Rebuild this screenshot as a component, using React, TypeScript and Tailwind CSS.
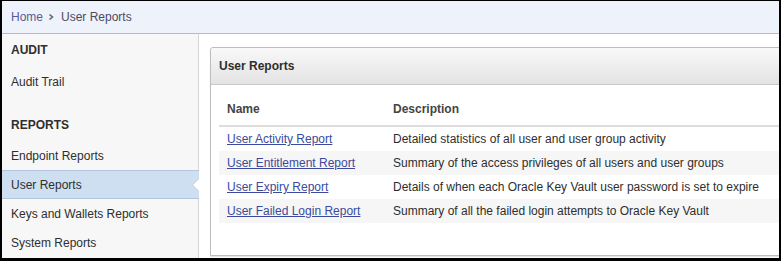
import { ReactNode } from 'react';

interface Report {
  name: string;
  description: string;
}

const reports: Report[] = [
  { name: 'User Activity Report', description: 'Detailed statistics of all user and user group activity' },
  { name: 'User Entitlement Report', description: 'Summary of the access privileges of all users and user groups' },
  { name: 'User Expiry Report', description: 'Details of when each Oracle Key Vault user password is set to expire' },
  { name: 'User Failed Login Report', description: 'Summary of all the failed login attempts to Oracle Key Vault' },
];

function NavHeading({ children }: { children: ReactNode }) {
  return <div className="h-[32px] flex items-center pl-[9px] font-bold text-[#2e2e2e]">{children}</div>;
}

function NavItem({ label, active }: { label: string; active?: boolean }) {
  if (active) {
    return (
      <div className="relative h-[29px] flex items-center pl-[9px] bg-[#cfdff2] border-y border-[#b4c6de] mr-[-1px] text-[#2e2e2e]">
        {label}
        {/* notch pointing at the content */}
        <span className="absolute right-0 top-1/2 -translate-y-1/2 w-0 h-0 border-y-[7px] border-y-transparent border-r-[7px] border-r-[#c3cfdd]" />
        <span className="absolute right-[-1px] top-1/2 -translate-y-1/2 w-0 h-0 border-y-[7px] border-y-transparent border-r-[7px] border-r-white" />
      </div>
    );
  }
  return <div className="h-[29px] flex items-center pl-[9px] text-[#2e2e2e]">{label}</div>;
}

export default function App() {
  return (
    <div
      className="w-[781px] h-[261px] bg-black pt-[1px] pl-[2px] pr-[2px] pb-[3px] text-[12px] leading-[14px]"
      style={{ fontFamily: '"Liberation Sans", Arial, sans-serif' }}
    >
      <div className="w-full h-full bg-white flex flex-col overflow-hidden">
        {/* Breadcrumb */}
        <div className="h-[33px] shrink-0 bg-[#eef2fb] border-b border-[#aebdd3] flex items-center pl-[9px]">
          <span className="text-[#585c94]">Home</span>
          <svg width="8" height="8" viewBox="0 0 8 8" className="ml-[4px] mr-[6px]">
            <path d="M2.5 1.5 L5.5 4 L2.5 6.5" fill="none" stroke="#666" strokeWidth="1.6" />
          </svg>
          <span className="text-[#4d4a5e]">User Reports</span>
        </div>

        <div className="flex flex-1 min-h-0">
          {/* Sidebar */}
          <div className="w-[197px] shrink-0 bg-[#f7f7f7] border-r border-[#d6d6d6]">
            <NavHeading>AUDIT</NavHeading>
            <div className="h-[32px] flex items-center pl-[9px] text-[#2e2e2e]">Audit Trail</div>
            <div className="h-[11px]" />
            <NavHeading>REPORTS</NavHeading>
            <NavItem label="Endpoint Reports" />
            <NavItem label="User Reports" active />
            <NavItem label="Keys and Wallets Reports" />
            <NavItem label="System Reports" />
          </div>

          {/* Content */}
          <div className="flex-1 min-w-0 overflow-hidden pl-[11px] pt-[13px]">
            <div className="w-[620px] h-[209px] border border-[#bdbdbd] rounded-tl-[3px] shadow-[0_1px_1px_rgba(0,0,0,0.12)] bg-white">
              <div className="h-[37px] flex items-center pl-[8px] font-bold text-[#2e2e2e] bg-gradient-to-b from-[#f9f9f9] to-[#e3e3e3] border-b border-[#c9c9c9] rounded-tl-[3px]">
                User Reports
              </div>
              <div className="px-[8px]">
                <div className="flex font-bold text-[#444] pt-[17px] pb-[9px] border-b-2 border-[#dddddd]">
                  <div className="w-[166px] pl-[8px]">Name</div>
                  <div className="pl-[8px]">Description</div>
                </div>
                {reports.map((r, i) => (
                  <div key={r.name} className={`h-[24px] flex items-center ${i % 2 === 1 ? 'bg-[#f6f6f6]' : ''}`}>
                    <div className="w-[166px] pl-[8px]">
                      <a href="#" className="text-[#3b4a9c] underline">{r.name}</a>
                    </div>
                    <div className="pl-[8px] text-[#2e2e2e] whitespace-nowrap">{r.description}</div>
                  </div>
                ))}
              </div>
            </div>
          </div>
        </div>
      </div>
    </div>
  );
}
